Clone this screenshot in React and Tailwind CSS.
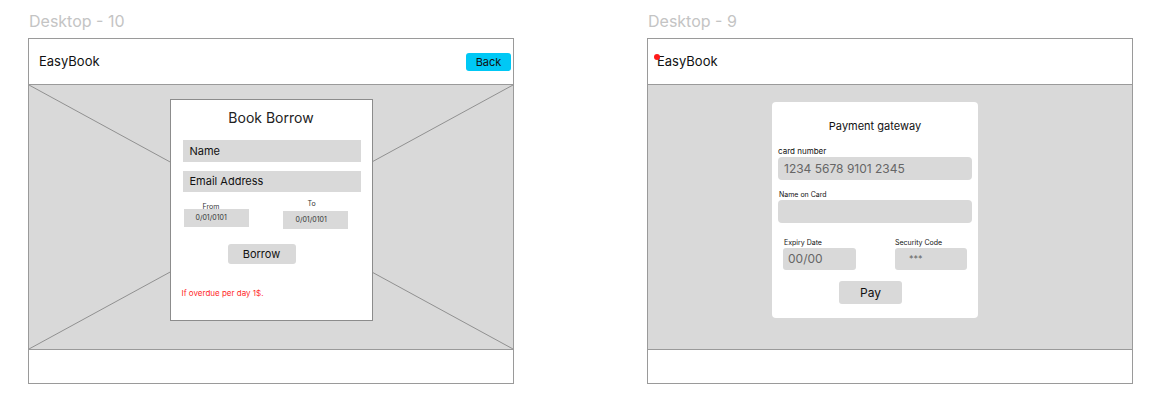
import React from 'react'

function Frame({ title, children }) {
  return (
    <div className="w-[486px] shrink-0">
      <div className="h-[28px] pl-[1px] text-[16px] leading-[20px] pt-[1px] text-[#c4c4c4]">
        {title}
      </div>
      <div className="border border-[#9a9a9a] bg-white">{children}</div>
    </div>
  )
}

function BorrowCard() {
  return (
    <div className="relative w-[203px] h-[222px] bg-white border border-[#8c8c8c]">
      <div className="pt-[9px] text-center text-[14px] leading-[17px] text-[#222]">Book Borrow</div>

      {/* inputs */}
      <div className="mt-[14px] ml-[12px] w-[178px] space-y-[9px]">
        <div className="h-[22px] bg-[#d9d9d9] pl-[7px] text-[11px] leading-[22px] text-[#111]">Name</div>
        <div className="h-[21px] bg-[#d9d9d9] pl-[7px] text-[11px] leading-[21px] text-[#111]">Email Address</div>
      </div>

      {/* dates */}
      <div className="mt-[8px] ml-[13px] flex gap-[34px]">
        <div className="w-[65px]">
          <div className="pl-[19px] pt-[3px] h-[8px] text-[7px] leading-[8px] text-[#333]">From</div>
          <div className="mt-[1px] h-[18px] bg-[#d9d9d9] pl-[12px] text-[7px] leading-[18px] text-[#333]">0/01/0101</div>
        </div>
        <div className="w-[65px]">
          <div className="pl-[25px] h-[8px] text-[7px] leading-[8px] text-[#333]">To</div>
          <div className="mt-[3px] h-[18px] bg-[#d9d9d9] pl-[13px] text-[7px] leading-[18px] text-[#333]">0/01/0101</div>
        </div>
      </div>

      <button className="block mt-[15px] ml-[57px] w-[68px] h-[20px] rounded-[3px] bg-[#d9d9d9] text-[11px] leading-[20px] text-[#111]">
        Borrow
      </button>

      <div className="mt-[24px] ml-[11px] text-[8px] leading-[10px] text-[#ff2a2a]">If overdue per day 1$.</div>
    </div>
  )
}

function PaymentCard() {
  return (
    <div className="w-[206px] h-[216px] bg-white rounded-[4px] px-[6px]">
      <div className="pt-[17px] text-center text-[11px] leading-[14px] text-[#111]">Payment gateway</div>

      <div className="mt-[14px] text-[8px] leading-[9px] text-[#111]">card number</div>
      <div className="mt-[1px] h-[23px] rounded-[4px] bg-[#d9d9d9] pl-[6px] text-[12px] leading-[23px] text-[#666]">
        1234 5678 9101 2345
      </div>

      <div className="mt-[11px] pl-[1px] text-[7px] leading-[8px] text-[#111]">Name on Card</div>
      <div className="mt-[1px] h-[23px] rounded-[4px] bg-[#d9d9d9]"></div>

      <div className="mt-[16px] flex pl-[5px] gap-[39px]">
        <div className="w-[73px]">
          <div className="pl-[1px] text-[7px] leading-[8px] text-[#111]">Expiry Date</div>
          <div className="mt-[1px] h-[22px] rounded-[3px] bg-[#d9d9d9] pl-[5px] text-[12px] leading-[22px] text-[#666]">
            00/00
          </div>
        </div>
        <div className="w-[72px]">
          <div className="text-[7px] leading-[8px] text-[#111]">Security Code</div>
          <div className="mt-[1px] h-[22px] rounded-[3px] bg-[#d9d9d9] pl-[14px] text-[9px] leading-[22px] text-[#666]">
            ***
          </div>
        </div>
      </div>

      <div className="mt-[11px] ml-[61px] w-[63px] h-[23px] rounded-[3px] bg-[#d9d9d9] text-center text-[12px] leading-[23px] text-[#111]">
        Pay
      </div>
    </div>
  )
}

export default function App() {
  return (
    <div className="w-[1153px] h-[406px] bg-white font-['Inter',sans-serif] pt-[10px] pl-[28px] flex gap-[133px]">
      {/* Desktop - 10 */}
      <Frame title="Desktop - 10">
        <div className="h-[46px] border-b border-[#9a9a9a] flex items-center justify-between pl-[10px] pr-[2px]">
          <span className="text-[13px] text-[#111]">EasyBook</span>
          <button className="w-[45px] h-[18px] rounded-[3px] bg-[#00c8f5] text-[11px] leading-[18px] text-[#111]">
            Back
          </button>
        </div>
        <div className="relative h-[264px] bg-[#d9d9d9] flex justify-center pt-[14px]">
          <svg className="absolute inset-0 w-full h-full" preserveAspectRatio="none" viewBox="0 0 484 264">
            <line x1="0" y1="0" x2="484" y2="264" stroke="#7d7d7d" strokeWidth="0.8" />
            <line x1="484" y1="0" x2="0" y2="264" stroke="#7d7d7d" strokeWidth="0.8" />
          </svg>
          <BorrowCard />
        </div>
        <div className="h-[34px] border-t border-[#9a9a9a]"></div>
      </Frame>

      {/* Desktop - 9 */}
      <Frame title="Desktop - 9">
        <div className="relative h-[46px] border-b border-[#9a9a9a] flex items-center pl-[9px]">
          <span className="absolute left-[6px] top-[15px] w-[6px] h-[6px] rounded-full bg-[#ff1a1a]"></span>
          <span className="text-[13px] text-[#111]">EasyBook</span>
        </div>
        <div className="h-[264px] bg-[#d9d9d9] pt-[17px] pl-[124px]">
          <PaymentCard />
        </div>
        <div className="h-[34px] border-t border-[#9a9a9a]"></div>
      </Frame>
    </div>
  )
}
